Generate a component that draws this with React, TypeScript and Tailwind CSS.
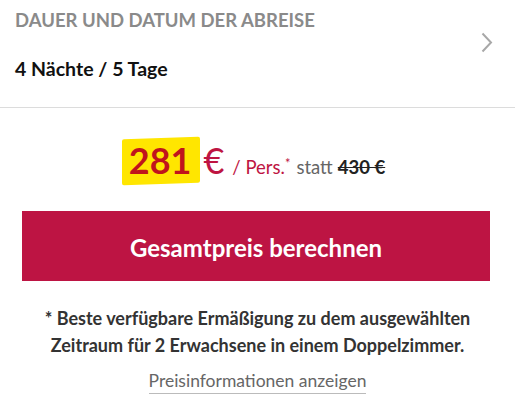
export default function App() {
  return (
    <div className="w-[515px] h-[407px] bg-white overflow-hidden" style={{ fontFamily: "Lato, 'Open Sans', sans-serif" }}>
      {/* Duration row */}
      <div className="flex items-start justify-between h-[108px] border-b border-[#dcdcdc] pl-[15px] pr-[22px]">
        <div className="flex flex-col">
          <div className="text-[18.5px] leading-[24px] font-bold text-[#8a8a8a] pt-[8px]">DAUER UND DATUM DER ABREISE</div>
          <div className="text-[19.5px] leading-[24px] font-bold text-[#111] mt-[25px]">4 Nächte / 5 Tage</div>
        </div>
        <svg width="12" height="21" viewBox="0 0 12 21" className="mt-[32px]">
          <path d="M1.5 1.5 L10 10.5 L1.5 19.5" fill="none" stroke="#a8a8a8" strokeWidth="2" />
        </svg>
      </div>

      {/* Price */}
      <div className="flex items-baseline justify-center pt-[32px] h-[102px] pr-[8px]">
        <span className="relative text-[36px] leading-[40px] font-bold text-[#c0141c] px-[7px]">
          <span className="absolute left-0 right-[-1px] top-[-2px] bottom-[-4px] bg-[#ffe600] -skew-y-2 rounded-[2px]" />
          <span className="relative">281</span>
        </span>
        <span className="text-[36px] leading-[40px] text-[#be1442] ml-[5px]">€</span>
        <span className="text-[18.5px] text-[#be1442] ml-[8px]">/ Pers.<sup className="text-[13px]">*</sup></span>
        <span className="text-[18.5px] text-[#666] ml-[6px]">statt</span>
        <span className="text-[18.5px] font-bold text-[#222] ml-[5px] line-through">430 €</span>
      </div>

      {/* Button */}
      <div className="pl-[22px] pr-[25px] pt-[1px]">
        <button type="button" className="w-full h-[70px] bg-[#bd1443] text-white text-[24px] font-bold flex items-center justify-center pt-[3px]">
          Gesamtpreis berechnen
        </button>
      </div>

      {/* Footnote */}
      <div className="flex flex-col items-center pt-[24px] text-center">
        <p className="text-[18px] leading-[27px] font-bold text-[#333]">
          * Beste verfügbare Ermäßigung zu dem ausgewählten<br />
          Zeitraum für 2 Erwachsene in einem Doppelzimmer.
        </p>
        <a className="mt-[10px] text-[17.5px] leading-[24px] text-[#666] border-b border-[#bbb]">Preisinformationen anzeigen</a>
      </div>
    </div>
  );
}
